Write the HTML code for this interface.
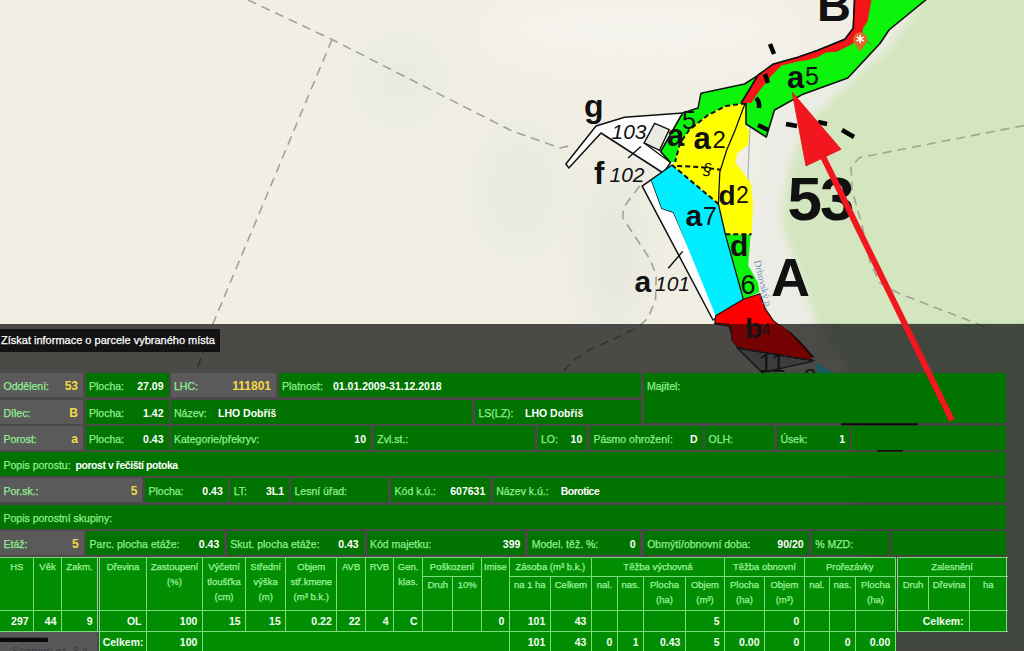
<!DOCTYPE html>
<html><head><meta charset="utf-8">
<style>
html,body{margin:0;padding:0;}
body{width:1024px;height:651px;overflow:hidden;position:relative;background:#f1efe4;font-family:"Liberation Sans",sans-serif;}
#map{position:absolute;left:0;top:0;}
#ov{position:absolute;left:0;top:324px;width:1024px;height:327px;background:rgba(0,0,0,0.69);}
#title{position:absolute;left:0;top:328.5px;width:220px;height:23px;background:#131313;color:#fff;font-size:11px;line-height:23px;white-space:nowrap;}
#title span{position:absolute;left:1px;top:0;}
.c{position:absolute;height:24px;background:#007300;font-size:10.5px;line-height:26px;color:#90ee90;white-space:nowrap;overflow:hidden;}
.g{background:#5a5a5a;}
.c .l{position:absolute;left:3.5px;top:0;}
.c .v{position:absolute;right:5px;top:0;color:#fff;font-weight:bold;}
.g .v{color:#f4d848;font-weight:bold;font-size:12px;}
.c .w{position:absolute;top:0;color:#fff;font-weight:bold;}
.vl{position:absolute;width:1px;background:#7ddc7d;}
.hl{position:absolute;height:1px;background:#7ddc7d;}
.tbg{position:absolute;background:#028e02;}
.ht{position:absolute;text-align:center;font-size:9.5px;line-height:12px;color:#9cf29c;white-space:nowrap;}
.vt{position:absolute;text-align:right;font-size:10.5px;line-height:14px;color:#f2fff2;font-weight:bold;white-space:nowrap;}

.c .l,.ht,#title span{-webkit-text-stroke:0.25px currentColor;}
</style></head><body>
<svg id="map" width="1024" height="651" viewBox="0 0 1024 651">
<!--MAP-->
<defs>
<filter id="bl8" x="-20%" y="-20%" width="140%" height="140%"><feGaussianBlur stdDeviation="8"/></filter>
<filter id="bl20" x="-50%" y="-50%" width="200%" height="200%"><feGaussianBlur stdDeviation="20"/></filter>
<filter id="bl2"><feGaussianBlur stdDeviation="1.2"/></filter>
</defs>
<rect x="0" y="0" width="1024" height="651" fill="#f1efe4"/>
<!-- hillshade -->
<ellipse cx="400" cy="80" rx="40" ry="40" fill="#e9eadf" filter="url(#bl20)"/>
<ellipse cx="520" cy="190" rx="40" ry="60" fill="#e8e9de" filter="url(#bl20)"/>
<ellipse cx="615" cy="250" rx="30" ry="80" fill="#e6e6dc" filter="url(#bl20)"/>
<ellipse cx="640" cy="30" rx="160" ry="40" fill="#f4f3ec" filter="url(#bl20)"/>
<!-- whitish corridor -->
<path d="M900,-10 L860,50 L790,100 L760,150 L750,240 L755,330 L830,330 L790,250 L790,160 L830,105 L880,70 L935,-10 Z" fill="#ebece5" filter="url(#bl8)"/>
<!-- pale green -->
<filter id="bl4" x="-20%" y="-20%" width="140%" height="140%"><feGaussianBlur stdDeviation="4"/></filter>
<path d="M930,-20 L1040,-20 L1040,360 L822,360 L812,310 L797,272 L783,225 L781.6,213 L789.2,167.3 L804.4,126.8 L840,91.3 L890.7,45.6 L915,10 Z" fill="#d4e6bf" filter="url(#bl4)"/>
<!-- dashed lines -->
<g fill="none" stroke="#a3a297" stroke-width="1.6" stroke-dasharray="9,6">
<path d="M248,0 L332,39.5 L512,131 L560,148 L573,145"/>
<path d="M332,39.5 L212.9,324 L195.7,373"/>
<path d="M1024,125.5 L860,157.5 L851,166 L852,190 L862,225 L870,262 L880,283 L898,293 L1024,342"/>
<path d="M639.6,186.1 L623.9,207 L622.6,217.4 L634.4,235.7 L650,259.2 L656.2,275 L655.5,300 L648,318 L637,328 L610,341 L591,349 L572,361 L560,376"/>
</g>
<!-- river -->
<path d="M750,128 L749,150 L748,172 L749,200" fill="none" stroke="#9fb0d0" stroke-width="1.2"/>
<!-- white road parcel -->
<path d="M565.9,164 L596,126 L624.5,117.2 L682.8,112.9 L660.7,151.6 L670.5,162.6 L663.2,173 L601,133 L568.8,167.9 Z" fill="#fdfdfd" stroke="#111" stroke-width="1.5" stroke-linejoin="round"/>
<path d="M654.6,123.3 L669.3,129.5 L659.5,150.3 L644.1,143 Z" fill="#ebeae2" stroke="#111" stroke-width="1.4"/>
<path d="M644.1,143 L670.5,162.6" stroke="#111" stroke-width="1.3"/>
<!-- white a101 -->
<path d="M642.2,186.1 L651.3,179.6 L661.8,208.3 L673.5,212.2 L719,316 L713,320 Z" fill="#fdfdfd" stroke="#111" stroke-width="1.5" stroke-linejoin="round"/>
<!-- green G1 -->
<path d="M682.8,112.9 L698,108 L701,93.2 L744.5,84 L758,75.3 L741.4,102.9 L746,103.3 L726,106 L707.6,115.3 L689.2,130 L680,143 L675.2,162 L670.5,162.6 L660.7,151.6 Z" fill="#0cf40c"/>
<path d="M670.5,162.6 L660.7,151.6 L682.8,112.9 L698,108 L701,93.2 L744.5,84 L758,75.3" fill="none" stroke="#111" stroke-width="1.5" stroke-linejoin="round"/>
<!-- yellow -->
<path d="M746,103.3 L750,108 L747,118 L745.3,125.5 L749.5,131 L748.1,145 L737,153.2 L735.6,162.9 L745.3,175.3 L750.9,183.6 L753,205.3 L751.6,234.3 L725.3,234.3 L718.4,203.9 L672,165 L675.2,162 L680,143 L689.2,130 L707.6,115.3 L726,106 Z" fill="#ffff00"/>
<!-- green d6 -->
<path d="M725.3,234.3 L750.6,234.8 L748.8,257 L748.2,265.5 L758,282.7 L759.5,292 L743.3,299.2 Z" fill="#0cf40c"/>
<!-- cyan -->
<path d="M651.3,179.6 L672,165 L718.4,203.9 L743.3,299.2 L715.7,315.8 L673.5,212.2 L661.8,208.3 Z" fill="#00eeff"/>
<path d="M672,165 L651.3,179.6" stroke="#111" stroke-width="1.4"/>
<!-- red b4 -->
<path d="M715.7,315.8 L743.3,299.2 L759.9,293.7 L765.4,308.9 L773.7,321.3 L791.4,333.8 L802.4,344.7 L813.3,357 L739.5,346 L734,342 L728.5,324 L714.8,323.4 Z" fill="#ff0000" stroke="#111" stroke-width="1.2"/>
<!-- lines on parcels -->
<g fill="none" stroke="#111" stroke-width="1.3">
<path d="M759.8,73 L745,103.5 L735,130.5 L726.7,150 L719.8,172 L718.4,203.9 L725.3,234.3 L743.3,299.2"/>
</g>
<g fill="none" stroke="#111" stroke-width="2" stroke-dasharray="5,3">
<path d="M746,103.3 L726,106 L707.6,115.3 L689.2,130 L680,143 L675.2,162"/>
<path d="M672,165 L718.4,203.9"/>
<path d="M677.2,166 L700,167 L721,169.8"/>
<path d="M725.3,234.3 L751.6,234.3"/>
<path d="M739.5,346 L813.3,361"/>
</g>
<!-- green strip G3 with red band -->
<path d="M854.7,-2 L853.3,28.3 L845,39.3 L817.4,50.4 L798,57.3 L773.2,64.2 L758,75.3 L741.4,102.9 L746,103.3 L746,124 L766.3,137 L774.5,110 L802.2,94.6 L847.8,78 L880,43.5 L889,30 L928,-2 Z" fill="#0cf40c" stroke="#111" stroke-width="1.6" stroke-linejoin="round"/>
<path d="M854.7,-2 L853.3,28.3 L845,39.3 L817.4,50.4 L798,57.3 L773.2,64.2 L758,75.3 L741.4,102.9 L751,102.9 L760.7,89.1 L771.8,75.3 L781.5,65.6 L798,61.5 L807.7,60.1 L817.4,57.3 L825.7,52.5 L836.7,51.8 L842.3,49 L853.3,43.5 L857.5,33.8 L872.7,46.3 L862,35 L863.2,28 L867.5,21.5 L871.8,-2 Z" fill="#f5141a"/>
<path d="M854.7,-2 L853.3,28.3 L845,39.3 L817.4,50.4 L798,57.3 L773.2,64.2 L758,75.3 L741.4,102.9" fill="none" stroke="#111" stroke-width="1.6"/>
<!-- thick dashes -->
<g fill="none" stroke="#000" stroke-width="4.5" stroke-linecap="butt">
<path d="M770,44 L774,54"/>
<path d="M765,74 L768,83"/>
<path d="M756,98 Q760,102 759,108"/>
<path d="M758,125 L768,130"/>
<path d="M786,124 L797,126"/>
<path d="M818,122 L827,124"/>
<path d="M842,130 L854,137"/>
</g>
<!-- marker -->
<circle cx="860.2" cy="39.3" r="7" fill="#e0682c"/>
<path d="M854.5,43 L860.2,51.8 L865.9,43 Z" fill="#e0682c"/>
<path d="M860.2,34.8 L860.2,43.2 M856.6,36.9 L863.8,41.1 M856.6,41.1 L863.8,36.9" stroke="#fff" stroke-width="1.6"/>
<!-- labels -->
<g font-family="Liberation Sans" fill="#111">
<text x="817" y="21" font-size="47" font-weight="bold">B</text>
<text x="787" y="87.7" font-size="31" font-weight="bold">a</text><text x="805" y="84.5" font-size="25">5</text>
<text x="787.5" y="220" font-size="62" font-weight="bold" letter-spacing="-2">53</text>
<text x="771" y="296" font-size="54" font-weight="bold">A</text>
<text x="584" y="117" font-size="32" font-weight="bold">g</text>
<text x="611.5" y="138.6" font-size="21" font-style="italic">103</text>
<text x="594" y="183.5" font-size="31" font-weight="bold">f</text>
<text x="609.5" y="181.6" font-size="21" font-style="italic">102</text>
<text x="667" y="146.4" font-size="31" font-weight="bold">a</text>
<text x="682" y="128.8" font-size="25">5</text>
<text x="693.5" y="149.3" font-size="31" font-weight="bold">a</text><text x="712.5" y="147.7" font-size="24">2</text>
<text x="703" y="175" font-size="16" font-style="italic">§</text>
<text x="718.5" y="205.3" font-size="28" font-weight="bold">d</text><text x="736" y="203" font-size="23">2</text>
<text x="685.5" y="226" font-size="30" font-weight="bold">a</text><text x="703" y="224.6" font-size="25">7</text>
<text x="730" y="256.3" font-size="30" font-weight="bold">d</text>
<text x="740.5" y="293.8" font-size="27">6</text>
<text x="634.5" y="292.3" font-size="30" font-weight="bold">a</text><text x="655" y="291" font-size="21" font-style="italic">101</text>
<text x="745" y="337.5" font-size="28" font-weight="bold">b</text><text x="761.5" y="334.5" font-size="16">4</text>
</g>
<text transform="translate(754,261) rotate(76)" font-family="Liberation Serif" font-size="10" fill="#7a90c0">Drhovský p.</text>
<!-- ticks -->
<g stroke="#111" stroke-width="1.4">
<path d="M628,158 L641,146.4"/>
<path d="M668.3,268.3 L682.7,251.4"/>
</g>

<!--/MAP-->
</svg>
<div id="ov"></div>
<!--UND-->
<svg id="und" width="1024" height="651" viewBox="0 0 1024 651" style="position:absolute;left:0;top:0">
<defs><filter id="ubl"><feGaussianBlur stdDeviation="6"/></filter><clipPath id="uc"><rect x="0" y="323.8" width="1024" height="328"/></clipPath></defs>
<g clip-path="url(#uc)">
<path d="M822,323 L1030,323 L1030,660 L880,660 L850,380 Z" fill="#43463f" filter="url(#ubl)" opacity="0.9"/>
<path d="M800,323 L822,323 L852,380 L830,380 Z" fill="#50504d" filter="url(#ubl)" opacity="0.6"/>

<path d="M714.2,323.8 L730.8,326.7 L731.8,340.4 L738.6,348.2 L812.8,360 L797.2,340.4 L783.5,326.7 L775.7,323.8 Z" fill="#740202"/>
<path d="M736.6,347.2 L762,372.6 L814.8,360.9 L738.6,348.2 Z" fill="#3c3c3c" stroke="#151515" stroke-width="1.4"/>
<path d="M810.9,360 L836.3,374 L818,374 L814.8,360.9 Z" fill="#1b5862"/>
<path d="M738.6,348.2 L812.8,360.9" fill="none" stroke="#151515" stroke-width="1.6" stroke-dasharray="4,3"/>
<path d="M714.2,323.8 L730.8,326.7 L731.8,340.4 L738.6,348.2" fill="none" stroke="#151515" stroke-width="1"/>
<g font-family="Liberation Sans" fill="#141414">
<text x="745" y="337.5" font-size="28" font-weight="bold">b</text><text x="761.5" y="334.5" font-size="16">4</text>
<text x="758.5" y="371.6" font-size="26">11</text>
<text x="804" y="384" font-size="22">2</text>
</g>
</g>
<path d="M841,424.3 L918,424.3 M877,450.5 L903,450.5" stroke="#0a0a0a" stroke-width="2"/>
<rect x="0" y="632" width="97" height="19" fill="#585858"/>
<rect x="0" y="637.7" width="47.8" height="4.3" fill="#0a0a0a"/>
<text x="12" y="655" font-family="Liberation Sans" font-size="11" fill="#3c3c46">Seznam cz, 3.4</text>
</svg>
<!--/UND-->
<div id="title"><span>Získat informace o parcele vybraného místa</span></div>

<!-- Row 1 -->
<div class="c g" style="left:0;top:373.2px;width:83px"><span class="l">Oddělení:</span><span class="v">53</span></div>
<div class="c" style="left:85.5px;top:373.2px;width:83px"><span class="l">Plocha:</span><span class="v">27.09</span></div>
<div class="c g" style="left:170.5px;top:373.2px;width:105.5px"><span class="l">LHC:</span><span class="v">111801</span></div>
<div class="c" style="left:278.5px;top:373.2px;width:362.5px"><span class="l">Platnost:</span><span class="w" style="left:54.5px">01.01.2009-31.12.2018</span></div>
<div class="c" style="left:643.5px;top:373.2px;width:362.5px;height:50px"><span class="l">Majitel:</span></div>
<!-- Row 2 -->
<div class="c g" style="left:0;top:399.5px;width:83px"><span class="l">Dílec:</span><span class="v">B</span></div>
<div class="c" style="left:85.5px;top:399.5px;width:83px"><span class="l">Plocha:</span><span class="v">1.42</span></div>
<div class="c" style="left:170.5px;top:399.5px;width:301.7px"><span class="l">Název:</span><span class="w" style="left:47.5px">LHO Dobříš</span></div>
<div class="c" style="left:475px;top:399.5px;width:165.5px"><span class="l">LS(LZ):</span><span class="w" style="left:50px">LHO Dobříš</span></div>
<!-- Row 3 -->
<div class="c g" style="left:0;top:425.8px;width:83px"><span class="l">Porost:</span><span class="v">a</span></div>
<div class="c" style="left:85.5px;top:425.8px;width:83px"><span class="l">Plocha:</span><span class="v">0.43</span></div>
<div class="c" style="left:170.5px;top:425.8px;width:200.5px"><span class="l">Kategorie/překryv:</span><span class="v">10</span></div>
<div class="c" style="left:373.8px;top:425.8px;width:161.5px"><span class="l">Zvl.st.:</span></div>
<div class="c" style="left:537.5px;top:425.8px;width:49.8px"><span class="l">LO:</span><span class="v">10</span></div>
<div class="c" style="left:590px;top:425.8px;width:112.6px"><span class="l">Pásmo ohrožení:</span><span class="v">D</span></div>
<div class="c" style="left:705px;top:425.8px;width:69px"><span class="l">OLH:</span></div>
<div class="c" style="left:777px;top:425.8px;width:73.2px"><span class="l">Úsek:</span><span class="v">1</span></div>
<div class="c" style="left:852.3px;top:425.8px;width:153.7px"></div>
<!-- Row 4 -->
<div class="c" style="left:0;top:452.1px;width:1006px"><span class="l">Popis porostu:</span><span class="w" style="left:75.5px;letter-spacing:-0.45px">porost v řečiští potoka</span></div>
<!-- Row 5 -->
<div class="c g" style="left:0;top:478.4px;width:142.4px"><span class="l">Por.sk.:</span><span class="v">5</span></div>
<div class="c" style="left:145px;top:478.4px;width:82.8px"><span class="l">Plocha:</span><span class="v">0.43</span></div>
<div class="c" style="left:230.3px;top:478.4px;width:58.7px"><span class="l">LT:</span><span class="v">3L1</span></div>
<div class="c" style="left:291px;top:478.4px;width:97.3px"><span class="l">Lesní úřad:</span></div>
<div class="c" style="left:391.1px;top:478.4px;width:99.2px"><span class="l">Kód k.ú.:</span><span class="v">607631</span></div>
<div class="c" style="left:492.7px;top:478.4px;width:513.3px"><span class="l">Název k.ú.:</span><span class="w" style="left:68px;letter-spacing:-0.5px">Borotice</span></div>
<!-- Row 6 -->
<div class="c" style="left:0;top:504.7px;width:1006px"><span class="l">Popis porostní skupiny:</span></div>
<!-- Row 7 -->
<div class="c g" style="left:0;top:531px;width:83.7px"><span class="l">Etáž:</span><span class="v">5</span></div>
<div class="c" style="left:86.1px;top:531px;width:138.2px"><span class="l">Parc. plocha etáže:</span><span class="v">0.43</span></div>
<div class="c" style="left:226.8px;top:531px;width:136.9px"><span class="l">Skut. plocha etáže:</span><span class="v">0.43</span></div>
<div class="c" style="left:366.5px;top:531px;width:158.9px"><span class="l">Kód majetku:</span><span class="v">399</span></div>
<div class="c" style="left:528.2px;top:531px;width:112.3px"><span class="l">Model. těž. %:</span><span class="v">0</span></div>
<div class="c" style="left:643.7px;top:531px;width:164.9px"><span class="l">Obmýtí/obnovní doba:</span><span class="v">90/20</span></div>
<div class="c" style="left:811.7px;top:531px;width:77.3px"><span class="l">% MZD:</span></div>
<div class="c" style="left:892.2px;top:531px;width:113.8px"></div>

<!--TB--><div id="tb">
<div class="tbg" style="left:0.0px;top:557.3px;width:97.6px;height:74.1px"></div>
<div class="vl" style="left:33.1px;top:557.3px;height:75.1px"></div>
<div class="vl" style="left:61.0px;top:557.3px;height:75.1px"></div>
<div class="vl" style="left:97.1px;top:557.3px;height:75.1px"></div>
<div class="hl" style="left:0.0px;top:556.8px;width:98.6px"></div>
<div class="hl" style="left:0.0px;top:609.7px;width:98.6px"></div>
<div class="hl" style="left:0.0px;top:630.9px;width:98.6px"></div>
<div class="ht" style="left:0.0px;width:33.6px;top:560.6px">HS</div>
<div class="ht" style="left:33.6px;width:27.9px;top:560.6px">Věk</div>
<div class="ht" style="left:61.5px;width:36.1px;top:560.6px">Zakm.</div>
<div class="vt" style="left:0.0px;width:28.6px;top:613.9px">297</div>
<div class="vt" style="left:33.6px;width:22.9px;top:613.9px">44</div>
<div class="vt" style="left:61.5px;width:31.1px;top:613.9px">9</div>
<div class="tbg" style="left:99.5px;top:557.3px;width:795.8px;height:95.7px"></div>
<div class="vl" style="left:99.0px;top:557.3px;height:96.7px"></div>
<div class="vl" style="left:146.0px;top:557.3px;height:96.7px"></div>
<div class="vl" style="left:201.9px;top:557.3px;height:96.7px"></div>
<div class="vl" style="left:245.1px;top:557.3px;height:75.1px"></div>
<div class="vl" style="left:285.3px;top:557.3px;height:75.1px"></div>
<div class="vl" style="left:336.3px;top:557.3px;height:75.1px"></div>
<div class="vl" style="left:364.9px;top:557.3px;height:75.1px"></div>
<div class="vl" style="left:393.2px;top:557.3px;height:75.1px"></div>
<div class="vl" style="left:422.1px;top:557.3px;height:75.1px"></div>
<div class="vl" style="left:481.0px;top:557.3px;height:75.1px"></div>
<div class="vl" style="left:508.8px;top:557.3px;height:96.7px"></div>
<div class="vl" style="left:590.9px;top:557.3px;height:96.7px"></div>
<div class="vl" style="left:724.0px;top:557.3px;height:96.7px"></div>
<div class="vl" style="left:803.8px;top:557.3px;height:96.7px"></div>
<div class="vl" style="left:894.8px;top:557.3px;height:96.7px"></div>
<div class="vl" style="left:452.4px;top:576.3px;height:56.1px"></div>
<div class="vl" style="left:549.8px;top:576.3px;height:77.7px"></div>
<div class="vl" style="left:616.9px;top:576.3px;height:77.7px"></div>
<div class="vl" style="left:643.0px;top:576.3px;height:77.7px"></div>
<div class="vl" style="left:684.9px;top:576.3px;height:77.7px"></div>
<div class="vl" style="left:764.0px;top:576.3px;height:77.7px"></div>
<div class="vl" style="left:828.8px;top:576.3px;height:77.7px"></div>
<div class="vl" style="left:855.1px;top:576.3px;height:77.7px"></div>
<div class="hl" style="left:99.5px;top:556.8px;width:796.8px"></div>
<div class="hl" style="left:422.6px;top:575.8px;width:59.9px"></div>
<div class="hl" style="left:509.3px;top:575.8px;width:387.0px"></div>
<div class="hl" style="left:99.5px;top:609.7px;width:796.8px"></div>
<div class="hl" style="left:99.5px;top:630.9px;width:796.8px"></div>
<div class="ht" style="left:99.5px;width:47.0px;top:560.6px">Dřevina</div>
<div class="ht" style="left:146.5px;width:55.9px;top:560.6px">Zastoupení</div>
<div class="ht" style="left:146.5px;width:55.9px;top:575.8px">(%)</div>
<div class="ht" style="left:202.4px;width:43.2px;top:560.6px">Výčetní</div>
<div class="ht" style="left:202.4px;width:43.2px;top:575.8px">tloušťka</div>
<div class="ht" style="left:202.4px;width:43.2px;top:591.0px">(cm)</div>
<div class="ht" style="left:245.6px;width:40.2px;top:560.6px">Střední</div>
<div class="ht" style="left:245.6px;width:40.2px;top:575.8px">výška</div>
<div class="ht" style="left:245.6px;width:40.2px;top:591.0px">(m)</div>
<div class="ht" style="left:285.8px;width:51.0px;top:560.6px">Objem</div>
<div class="ht" style="left:285.8px;width:51.0px;top:575.8px">stř.kmene</div>
<div class="ht" style="left:285.8px;width:51.0px;top:591.0px">(m³ b.k.)</div>
<div class="ht" style="left:336.8px;width:28.6px;top:560.6px">AVB</div>
<div class="ht" style="left:365.4px;width:28.3px;top:560.6px">RVB</div>
<div class="ht" style="left:393.7px;width:28.9px;top:560.6px">Gen.</div>
<div class="ht" style="left:393.7px;width:28.9px;top:575.8px">klas.</div>
<div class="ht" style="left:422.6px;width:58.9px;top:560.6px">Poškození</div>
<div class="ht" style="left:481.5px;width:27.8px;top:560.6px">Imise</div>
<div class="ht" style="left:509.3px;width:82.1px;top:560.6px">Zásoba (m³ b.k.)</div>
<div class="ht" style="left:591.4px;width:133.1px;top:560.6px">Těžba výchovná</div>
<div class="ht" style="left:724.5px;width:79.8px;top:560.6px">Těžba obnovní</div>
<div class="ht" style="left:804.3px;width:91.0px;top:560.6px">Prořezávky</div>
<div class="ht" style="left:422.6px;width:30.3px;top:578.5px">Druh</div>
<div class="ht" style="left:452.9px;width:28.6px;top:578.5px">10%</div>
<div class="ht" style="left:509.3px;width:41.0px;top:578.5px">na 1 ha</div>
<div class="ht" style="left:550.3px;width:41.1px;top:578.5px">Celkem</div>
<div class="ht" style="left:591.4px;width:26.0px;top:578.5px">nal.</div>
<div class="ht" style="left:617.4px;width:26.1px;top:578.5px">nas.</div>
<div class="ht" style="left:643.5px;width:41.9px;top:578.5px">Plocha</div>
<div class="ht" style="left:643.5px;width:41.9px;top:593.7px">(ha)</div>
<div class="ht" style="left:685.4px;width:39.1px;top:578.5px">Objem</div>
<div class="ht" style="left:685.4px;width:39.1px;top:593.7px">(m³)</div>
<div class="ht" style="left:724.5px;width:40.0px;top:578.5px">Plocha</div>
<div class="ht" style="left:724.5px;width:40.0px;top:593.7px">(ha)</div>
<div class="ht" style="left:764.5px;width:39.8px;top:578.5px">Objem</div>
<div class="ht" style="left:764.5px;width:39.8px;top:593.7px">(m³)</div>
<div class="ht" style="left:804.3px;width:25.0px;top:578.5px">nal.</div>
<div class="ht" style="left:829.3px;width:26.3px;top:578.5px">nas.</div>
<div class="ht" style="left:855.6px;width:39.7px;top:578.5px">Plocha</div>
<div class="ht" style="left:855.6px;width:39.7px;top:593.7px">(ha)</div>
<div class="vt" style="left:99.5px;width:42.0px;top:613.9px">OL</div>
<div class="vt" style="left:146.5px;width:50.9px;top:613.9px">100</div>
<div class="vt" style="left:202.4px;width:38.2px;top:613.9px">15</div>
<div class="vt" style="left:245.6px;width:35.2px;top:613.9px">15</div>
<div class="vt" style="left:285.8px;width:46.0px;top:613.9px">0.22</div>
<div class="vt" style="left:336.8px;width:23.6px;top:613.9px">22</div>
<div class="vt" style="left:365.4px;width:23.3px;top:613.9px">4</div>
<div class="vt" style="left:393.7px;width:23.9px;top:613.9px">C</div>
<div class="vt" style="left:481.5px;width:22.8px;top:613.9px">0</div>
<div class="vt" style="left:509.3px;width:36.0px;top:613.9px">101</div>
<div class="vt" style="left:550.3px;width:36.1px;top:613.9px">43</div>
<div class="vt" style="left:685.4px;width:34.1px;top:613.9px">5</div>
<div class="vt" style="left:764.5px;width:34.8px;top:613.9px">0</div>
<div class="vt ck" style="left:99.5px;width:44.0px;top:635.4px">Celkem:</div>
<div class="vt" style="left:146.5px;width:50.9px;top:635.4px">100</div>
<div class="vt" style="left:509.3px;width:36.0px;top:635.4px">101</div>
<div class="vt" style="left:550.3px;width:36.1px;top:635.4px">43</div>
<div class="vt" style="left:591.4px;width:21.0px;top:635.4px">0</div>
<div class="vt" style="left:617.4px;width:21.1px;top:635.4px">1</div>
<div class="vt" style="left:643.5px;width:36.9px;top:635.4px">0.43</div>
<div class="vt" style="left:685.4px;width:34.1px;top:635.4px">5</div>
<div class="vt" style="left:724.5px;width:35.0px;top:635.4px">0.00</div>
<div class="vt" style="left:764.5px;width:34.8px;top:635.4px">0</div>
<div class="vt" style="left:829.3px;width:21.3px;top:635.4px">0</div>
<div class="vt" style="left:855.6px;width:34.7px;top:635.4px">0.00</div>
<div class="tbg" style="left:897.5px;top:557.3px;width:109.3px;height:74.1px"></div>
<div class="vl" style="left:897.0px;top:557.3px;height:75.1px"></div>
<div class="vl" style="left:1006.3px;top:557.3px;height:75.1px"></div>
<div class="vl" style="left:928.1px;top:576.3px;height:34.9px"></div>
<div class="vl" style="left:969.1px;top:576.3px;height:56.1px"></div>
<div class="hl" style="left:897.5px;top:556.8px;width:110.3px"></div>
<div class="hl" style="left:897.5px;top:575.8px;width:110.3px"></div>
<div class="hl" style="left:897.5px;top:609.7px;width:110.3px"></div>
<div class="hl" style="left:897.5px;top:630.9px;width:110.3px"></div>
<div class="ht" style="left:897.5px;width:109.3px;top:560.6px">Zalesnění</div>
<div class="ht" style="left:897.5px;width:31.1px;top:578.5px">Druh</div>
<div class="ht" style="left:928.6px;width:41.0px;top:578.5px">Dřevina</div>
<div class="ht" style="left:969.6px;width:37.2px;top:578.5px">ha</div>
<div class="vt ck" style="left:897.5px;width:66.1px;top:613.9px">Celkem:</div>
</div><!--/TB-->
<svg id="arr" width="1024" height="651" viewBox="0 0 1024 651" style="position:absolute;left:0;top:0">
<path d="M823.5,157.6 L952,420.4" stroke="#f2161e" stroke-width="6" stroke-linecap="butt"/>
<path d="M792.1,92.1 L806,165.9 L841,149.3 Z" fill="#f2161e" stroke="#d81418" stroke-width="0.8" stroke-linejoin="round"/>
</svg>
</body></html>
